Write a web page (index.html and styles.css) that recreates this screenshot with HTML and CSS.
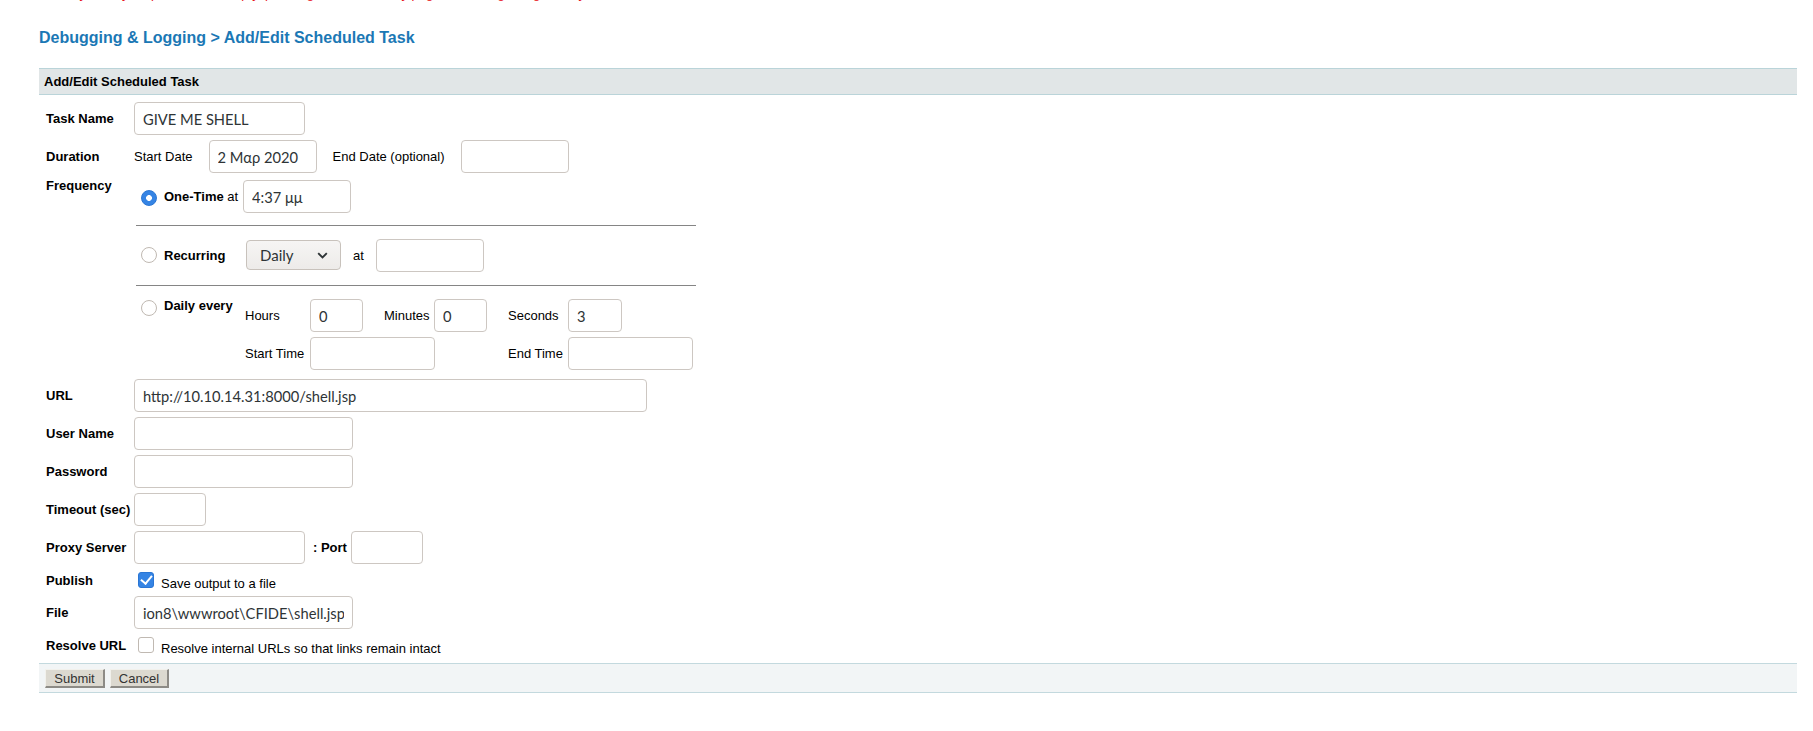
FILE: index.html
```html
<!DOCTYPE html>
<html lang="en">
<head>
    <meta charset="UTF-8">
    <title>Add/Edit Scheduled Task</title>
    <link rel="stylesheet" href="styles.css">
</head>
<body>
    <div class="content">
        <p class="alert">Security alert: your password is empty, please go to the Security page and change it right away.</p>
        <h2 class="crumb">Debugging &amp; Logging &gt; Add/Edit Scheduled Task</h2>

        <form class="panel" id="taskForm">
            <div class="panel-head">Add/Edit Scheduled Task</div>

            <div class="form-grid">
                <label class="lbl" for="taskName">Task Name</label>
                <div class="cell">
                    <input type="text" id="taskName" class="w-171" value="GIVE ME SHELL">
                </div>

                <div class="lbl">Duration</div>
                <div class="cell duration">
                    <span>Start Date</span>
                    <input type="text" class="w-108" value="2 Μαρ 2020">
                    <span>End Date (optional)</span>
                    <input type="text" class="w-108">
                </div>

                <div class="lbl lbl-top">Frequency</div>
                <div class="freq">
                    <div class="opt">
                        <div class="opt-cell opt-once">
                            <input type="radio" name="freq" class="radio" checked>
                            <span><b>One-Time</b> at</span>
                        </div>
                        <input type="text" class="w-108" value="4:37 μμ">
                    </div>
                    <hr class="sep">
                    <div class="opt opt-recur">
                        <div class="opt-cell">
                            <input type="radio" name="freq" class="radio">
                            <b>Recurring</b>
                        </div>
                        <span class="select">
                            <select>
                                <option>Daily</option>
                                <option>Weekly</option>
                                <option>Monthly</option>
                            </select>
                            <svg class="chevron" width="11" height="7" viewBox="0 0 11 7"><path d="M1.2 1.2l4.3 4.3 4.3-4.3" fill="none" stroke="#2e3436" stroke-width="1.9"/></svg>
                        </span>
                        <span class="at">at</span>
                        <input type="text" class="w-108">
                    </div>
                    <hr class="sep sep-2">
                    <div class="opt opt-daily">
                        <div class="opt-cell">
                            <input type="radio" name="freq" class="radio">
                            <b>Daily every</b>
                        </div>
                        <div class="every">
                            <span>Hours</span>
                            <input type="text" class="w-53" value="0">
                            <span>Minutes</span>
                            <input type="text" class="w-53" value="0">
                            <span>Seconds</span>
                            <input type="text" class="w-54" value="3">
                            <span>Start Time</span>
                            <input type="text" class="w-125 span-2">
                            <span class="col-5">End Time</span>
                            <input type="text" class="w-125">
                        </div>
                    </div>
                </div>

                <label class="lbl" for="url">URL</label>
                <div class="cell">
                    <input type="text" id="url" class="w-513" value="http://10.10.14.31:8000/shell.jsp">
                </div>

                <label class="lbl" for="userName">User Name</label>
                <div class="cell"><input type="text" id="userName" class="w-219"></div>

                <label class="lbl" for="password">Password</label>
                <div class="cell"><input type="password" id="password" class="w-219"></div>

                <label class="lbl" for="timeout">Timeout (sec)</label>
                <div class="cell"><input type="text" id="timeout" class="w-72"></div>

                <label class="lbl" for="proxy">Proxy Server</label>
                <div class="cell">
                    <input type="text" id="proxy" class="w-171">
                    <b class="port">: Port</b>
                    <input type="text" class="w-72">
                </div>

                <div class="lbl">Publish</div>
                <div class="cell check-row">
                    <input type="checkbox" class="check" checked>
                    <span class="check-text">Save output to a file</span>
                </div>

                <label class="lbl" for="file">File</label>
                <div class="cell"><input type="text" id="file" class="w-219 file-path" value="ion8\wwwroot\CFIDE\shell.jsp"></div>

                <div class="lbl">Resolve URL</div>
                <div class="cell check-row">
                    <input type="checkbox" class="check">
                    <span class="check-text">Resolve internal URLs so that links remain intact</span>
                </div>
            </div>

            <div class="panel-foot">
                <button type="submit" class="btn btn-submit">Submit</button>
                <button type="button" class="btn btn-cancel">Cancel</button>
            </div>
        </form>
    </div>
</body>
</html>
```

FILE: styles.css
```css
body {
    margin: 0;
    font-family: "Liberation Sans", Arial, sans-serif;
    font-size: 13px;
    color: #000;
    background: #fff;
}

.content {
    padding: 0 16px 0 39px;
}

.alert {
    margin: -14px 0 0;
    color: #e8141c;
    line-height: 15px;
    white-space: nowrap;
}

.crumb {
    margin: 28px 0 0;
    font-size: 16px;
    line-height: 18px;
    color: #1b78b5;
}

.panel {
    margin: 21px 0 0;
}

.panel-head {
    background: #e1e6e7;
    border-top: 1px solid #bad4d9;
    border-bottom: 1px solid #bad4d9;
    height: 25px;
    line-height: 25px;
    padding: 0 5px;
    font-weight: bold;
}

.form-grid {
    display: grid;
    grid-template-columns: 88px 1fr;
    row-gap: 5px;
    align-items: center;
    padding: 7px 0 7px 7px;
}

.lbl {
    font-weight: bold;
    line-height: 15px;
}

.lbl-top {
    align-self: start;
}

.cell {
    display: flex;
    align-items: center;
}

/* text boxes */
input[type="text"],
input[type="password"] {
    box-sizing: border-box;
    height: 33px;
    margin: 0;
    padding: 0 8px;
    border: 1px solid #cdc7c2;
    border-radius: 4px;
    background: #fff;
    color: #2e3436;
    font-family: "Lato", "Liberation Serif", serif;
    font-size: 14.7px;
    outline: none;
}

.file-path {
    padding-right: 5px;
}

.w-53 { width: 53px; }
.w-54 { width: 54px; }
.w-72 { width: 72px; }
.w-108 { width: 108px; }
.w-125 { width: 125px; }
.w-171 { width: 171px; }
.w-219 { width: 219px; }
.w-513 { width: 513px; }

.duration {
    gap: 16px;
}

/* frequency block */
.freq {
    padding-top: 2px;
    margin-bottom: 4px;
}

.opt {
    display: flex;
    align-items: center;
    padding-left: 7px;
}

.opt-recur {
    min-height: 34px;
}

.opt-cell {
    display: flex;
    align-items: center;
    width: 104px;
    line-height: 15px;
}

.opt-cell .radio {
    margin-right: 7px;
}

.opt-cell.opt-once {
    width: 102px;
}

.opt-once .radio {
    margin-top: 3px;
}

.opt-daily {
    align-items: flex-start;
}

.opt-daily .opt-cell {
    align-items: flex-start;
    margin-top: -1px;
}

.opt-daily .radio {
    margin-top: 2px;
}

.sep {
    width: 560px;
    height: 0;
    margin: 12px 0 12px 2px;
    border: 0;
    border-top: 1px solid #858585;
}

.sep-2 {
    margin: 13px 0 13px 2px;
}

.radio {
    appearance: none;
    -webkit-appearance: none;
    box-sizing: border-box;
    width: 16px;
    height: 16px;
    margin: 0;
    border: 1px solid #c0b9b2;
    border-radius: 50%;
    background: #fff;
    flex: none;
}

.radio:checked {
    border-color: #2a76d4;
    background: radial-gradient(circle, #fff 0 2.6px, #3584e4 3.2px);
}

.select {
    position: relative;
    margin-left: 1px;
}

.select select {
    appearance: none;
    -webkit-appearance: none;
    box-sizing: border-box;
    display: block;
    width: 95px;
    height: 30px;
    padding: 0 0 0 13px;
    border: 1px solid #c8c2bc;
    border-radius: 4px;
    background: linear-gradient(#f6f5f4, #edebe9);
    color: #2e3436;
    font-family: "Lato", sans-serif;
    font-size: 15px;
}

.chevron {
    position: absolute;
    right: 13px;
    top: 12px;
    pointer-events: none;
}

.at {
    margin: 0 12px;
}

.every {
    display: grid;
    grid-template-columns: 65px 74px 50px 74px 60px auto;
    row-gap: 5px;
    align-items: center;
}

.span-2 {
    grid-column: 2 / span 2;
}

.col-5 {
    grid-column: 5;
}

.port {
    margin: 0 4px 0 8px;
}

/* check boxes */
.check-row {
    min-height: 22px;
}

.check {
    appearance: none;
    -webkit-appearance: none;
    box-sizing: border-box;
    width: 16px;
    height: 16px;
    margin: 3px 0 3px 4px;
    border: 1px solid #c0b9b2;
    border-radius: 3px;
    background: #fff;
    flex: none;
    position: relative;
}

.check:checked {
    border-color: #2a76d4;
    background: #3584e4;
}

.check:checked::after {
    content: "";
    position: absolute;
    left: 4px;
    top: 0px;
    width: 5px;
    height: 9px;
    border: solid #fff;
    border-width: 0 2px 2px 0;
    transform: rotate(40deg);
}

.check-text {
    margin: 6px 0 0 7px;
    line-height: 15px;
}

/* buttons */
.panel-foot {
    display: flex;
    gap: 5px;
    box-sizing: border-box;
    height: 30px;
    padding: 5px 6px 0;
    background: #f2f5f6;
    border-top: 1px solid #c3d9de;
    border-bottom: 1px solid #c3d9de;
}

.btn {
    box-sizing: border-box;
    height: 19px;
    padding: 0;
    border-style: solid;
    border-width: 1px 2px 2px 1px;
    border-color: #f2f1ec #8d8b86 #8d8b86 #f2f1ec;
    background: #dcd9d0;
    color: #333;
    font-family: "Liberation Sans", Arial, sans-serif;
    font-size: 13px;
    line-height: 15px;
    cursor: pointer;
}

.btn-submit { width: 60px; }
.btn-cancel { width: 59px; }
```
